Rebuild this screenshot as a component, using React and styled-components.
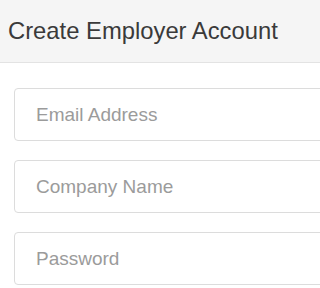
import React from "react";
import styled, { createGlobalStyle } from "styled-components";

const GlobalStyle = createGlobalStyle`
  html, body {
    margin: 0;
    padding: 0;
    background: #ffffff;
    overflow: hidden;
    font-family: "Liberation Sans", Arial, sans-serif;
  }
`;

const Page = styled.div`
  width: 100%;
  min-width: 288px;
  height: 288px;
  overflow: hidden;
  background: #ffffff;
`;

const Header = styled.header`
  height: 63px;
  box-sizing: border-box;
  background: #f5f5f5;
  border-bottom: 1px solid #e3e3e3;
  display: flex;
  align-items: center;
  padding-left: 8px;
  white-space: nowrap;
`;

const Title = styled.h1`
  margin: 0;
  font-size: 23.8px;
  font-weight: 400;
  color: #3a3a3a;
  line-height: 1;
  margin-top: -1px;
`;

const Form = styled.form`
  display: flex;
  flex-direction: column;
  gap: 19px;
  padding: 25px 0 0 14px;
`;

const Input = styled.input`
  box-sizing: border-box;
  width: 340px;
  height: 53px;
  padding: 0 21px;
  border: 1px solid #dcdcdc;
  border-radius: 4px;
  background: #ffffff;
  font-family: "Liberation Sans", Arial, sans-serif;
  font-size: 19px;
  color: #555;
  outline: none;
  &::placeholder {
    color: #9b9b9b;
    opacity: 1;
  }
`;

export default function App() {
  return (
    <Page>
      <GlobalStyle />
      <Header>
        <Title>Create Employer Account</Title>
      </Header>
      <Form>
        <Input type="email" placeholder="Email Address" />
        <Input type="text" placeholder="Company Name" />
        <Input type="password" placeholder="Password" />
      </Form>
    </Page>
  );
}
